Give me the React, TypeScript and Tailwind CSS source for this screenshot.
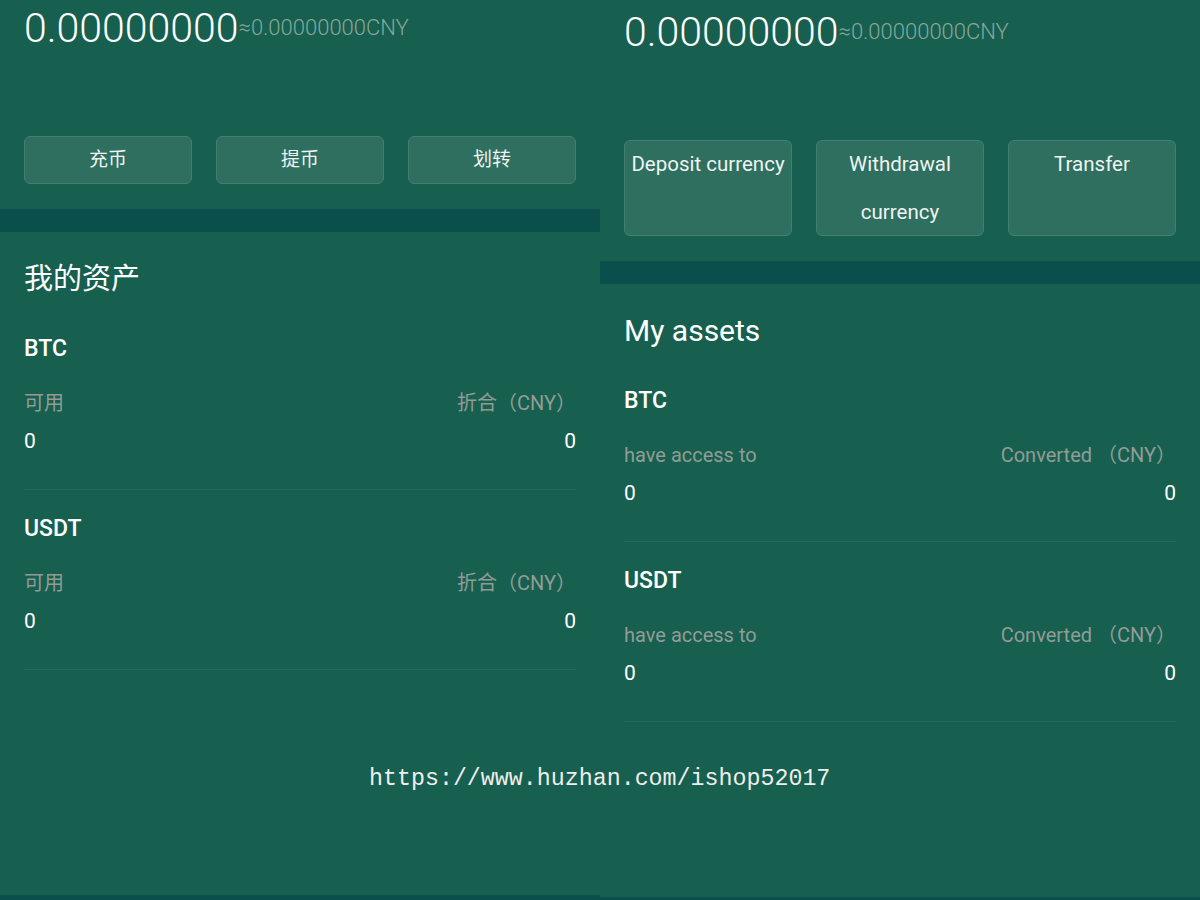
import React from "react";

const font = { fontFamily: "Roboto, 'Noto Sans CJK SC', sans-serif" };

interface Labels {
  actions: string[];
  title: string;
  available: string;
  converted: string;
  tall: boolean;
}

function AssetBlock({ coin, available, converted }: { coin: string; available: string; converted: string }) {
  return (
    <div className="border-b border-[#216b59] pb-[34px]">
      <div className="text-[23px] leading-[28px] font-medium text-white">{coin}</div>
      <div className="mt-[27px] flex justify-between text-[20px] leading-[26px] text-[#929c96]">
        <span>{available}</span>
        <span>{converted}</span>
      </div>
      <div className="mt-[11px] flex justify-between text-[21px] leading-[28px] text-white">
        <span>0</span>
        <span>0</span>
      </div>
    </div>
  );
}

function Panel({ labels, top, bottomGap }: { labels: Labels; top: string; bottomGap: string }) {
  return (
    <div className="w-[600px] h-[900px] shrink-0 overflow-hidden bg-[#175f4f]">
      {/* Balance */}
      <div className={`${top} px-[24px] flex items-center`}>
        <span className="text-[41px] leading-[48px] font-light text-white">0.00000000</span>
        <span className="text-[22px] leading-[28px] font-light text-[#86a89c]">≈0.00000000CNY</span>
      </div>

      {/* Actions */}
      <div className="mt-[84px] px-[24px] grid grid-cols-3 gap-[24px]">
        {labels.actions.map((a) => (
          <div
            key={a}
            className={`${labels.tall ? "h-[96px] items-start text-[20.5px]" : "h-[48px] items-center text-[19px]"} flex justify-center text-center rounded-[6px] bg-[#2e6f5f] border border-[#437f70] text-[#eef4f1] leading-[48px]`}
          >
            <span className={labels.tall ? "-mt-px" : ""}>{a}</span>
          </div>
        ))}
      </div>

      <div className="mt-[25px] h-[23px] bg-[#0b4f4c]" />

      {/* Assets */}
      <div className="px-[24px]">
        <div className={`mt-[29px] ${labels.tall ? "text-[30px]" : "text-[29px]"} leading-[36px] text-white`}>{labels.title}</div>
        <div className="mt-[38px]">
          <AssetBlock coin="BTC" available={labels.available} converted={labels.converted} />
        </div>
        <div className="mt-[25px]">
          <AssetBlock coin="USDT" available={labels.available} converted={labels.converted} />
        </div>
      </div>

      <div className={`${bottomGap} h-[23px] bg-[#0b4f4c]`} />
    </div>
  );
}

export default function App() {
  return (
    <div className="relative w-[1200px] h-[900px] overflow-hidden flex" style={font}>
      <Panel
        top="pt-[4px]"
        bottomGap="mt-[225px]"
        labels={{
          actions: ["充币", "提币", "划转"],
          title: "我的资产",
          available: "可用",
          converted: "折合（CNY）",
          tall: false,
        }}
      />
      <Panel
        top="pt-[8px]"
        bottomGap="mt-[175px]"
        labels={{
          actions: ["Deposit currency", "Withdrawal currency", "Transfer"],
          title: "My assets",
          available: "have access to",
          converted: "Converted （CNY）",
          tall: true,
        }}
      />

      {/* Watermark */}
      <div
        className="absolute left-[369px] top-[764px] text-[23.3px] leading-[30px] text-[#eeeeee] whitespace-nowrap"
        style={{ fontFamily: "'Liberation Mono', monospace" }}
      >
        https://www.huzhan.com/ishop52017
      </div>
    </div>
  );
}
